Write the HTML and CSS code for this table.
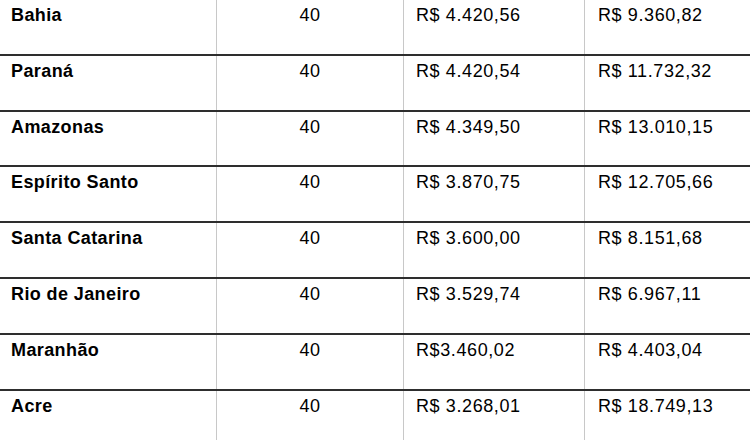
FILE: index.html
```html
<!DOCTYPE html>
<html lang="pt-BR">
<head>
<meta charset="utf-8">
<title>Tabela</title>
<link rel="stylesheet" href="styles.css">
</head>
<body>
<div class="viewport">
  <div class="table">
    <div class="row"><div class="cell state">Bahia</div><div class="cell hours">40</div><div class="cell money">R$ 4.420,56</div><div class="cell money last">R$ 9.360,82</div></div>
    <div class="row"><div class="cell state">Paraná</div><div class="cell hours">40</div><div class="cell money">R$ 4.420,54</div><div class="cell money last">R$ 11.732,32</div></div>
    <div class="row"><div class="cell state">Amazonas</div><div class="cell hours">40</div><div class="cell money">R$ 4.349,50</div><div class="cell money last">R$ 13.010,15</div></div>
    <div class="row"><div class="cell state">Espírito Santo</div><div class="cell hours">40</div><div class="cell money">R$ 3.870,75</div><div class="cell money last">R$ 12.705,66</div></div>
    <div class="row"><div class="cell state">Santa Catarina</div><div class="cell hours">40</div><div class="cell money">R$ 3.600,00</div><div class="cell money last">R$ 8.151,68</div></div>
    <div class="row"><div class="cell state">Rio de Janeiro</div><div class="cell hours">40</div><div class="cell money">R$ 3.529,74</div><div class="cell money last">R$ 6.967,11</div></div>
    <div class="row"><div class="cell state">Maranhão</div><div class="cell hours">40</div><div class="cell money">R$3.460,02</div><div class="cell money last">R$ 4.403,04</div></div>
    <div class="row"><div class="cell state">Acre</div><div class="cell hours">40</div><div class="cell money">R$ 3.268,01</div><div class="cell money last">R$ 18.749,13</div></div>
  </div>
</div>
</body>
</html>
```
FILE: styles.css
```css
html, body {
  margin: 0;
  padding: 0;
  background: #ffffff;
}
.viewport {
  width: 750px;
  height: 440px;
  overflow: hidden;
}
.table {
  font-family: "Liberation Sans", Arial, sans-serif;
  font-size: 18px;
  line-height: 20px;
  letter-spacing: 0.6px;
  color: #000;
}
.row {
  display: grid;
  grid-template-columns: 217px 187px 181px 1fr;
  height: 55.8px;
  box-sizing: border-box;
  border-bottom: 2px solid #2e2e2e;
}
.cell {
  border-right: 1px solid #c8c8c8;
  padding-top: 5px;
  box-sizing: border-box;
}
.cell.last {
  border-right: none;
}
.state {
  font-weight: bold;
  letter-spacing: 0.4px;
  padding-left: 11px;
}
.hours {
  text-align: center;
}
.money {
  padding-left: 12px;
}
.money.last {
  padding-left: 13px;
}
```
